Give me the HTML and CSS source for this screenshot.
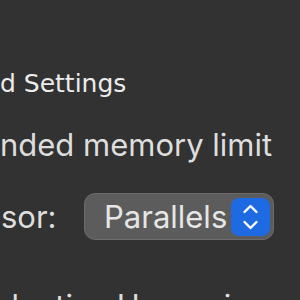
FILE: index.html
```html
<!DOCTYPE html>
<html lang="en">
<head>
  <meta charset="UTF-8" />
  <title>Advanced Settings</title>
  <link rel="stylesheet" href="styles.css">
</head>
<body>

<div class="pane">
  <h2 class="section-title">d Settings</h2>

  <div class="row check-row">nded memory limit</div>

  <div class="row hv-row">
    <span class="label">sor:</span>
    <div class="popup">
      <span class="popup-value">Parallels</span>
      <span class="stepper">
        <svg width="39" height="38" viewBox="0 0 39 38">
          <path d="M13.5 14 L19.5 8 L25.5 14" fill="none" stroke="#fff" stroke-width="2.4" stroke-linecap="round" stroke-linejoin="round"/>
          <path d="M13.5 24 L19.5 30 L25.5 24" fill="none" stroke="#fff" stroke-width="2.4" stroke-linecap="round" stroke-linejoin="round"/>
        </svg>
      </span>
    </div>
  </div>

  <div class="row check-row last">daptive Hypervisor</div>
</div>

</body>
</html>
```

FILE: styles.css
```css
html, body {
  margin: 0;
  height: 100%;
  overflow: hidden;
}

body {
  background: #323232;
  color: #dedede;
  font-family: Inter, 'Noto Sans', sans-serif;
}

.pane {
  padding-top: 69px;
  display: flex;
  flex-direction: column;
}

.section-title {
  margin: 0;
  font-family: 'DejaVu Sans', sans-serif;
  font-weight: normal;
  font-size: 25px;
  line-height: 30px;
  color: #ececec;
}

.row {
  font-size: 31px;
  line-height: 36px;
}

.check-row {
  margin-top: 28px;
}

.hv-row {
  display: flex;
  align-items: center;
  margin-top: 30px;
}

.check-row.last {
  margin-top: 48px;
}

.label {
  width: 83px;
  padding-left: 1px;
}

.popup {
  box-sizing: border-box;
  width: 190px;
  height: 47px;
  border: 1px solid #6c6c6c;
  border-radius: 11px;
  background: #5c5c5c;
  display: flex;
  align-items: center;
  justify-content: space-between;
  padding: 0 3px 0 19px;
}

.popup-value {
  color: #e6e6e6;
}

.stepper {
  display: flex;
  width: 39px;
  height: 38px;
  border-radius: 8px;
  background: #1d6ae2;
}
```
